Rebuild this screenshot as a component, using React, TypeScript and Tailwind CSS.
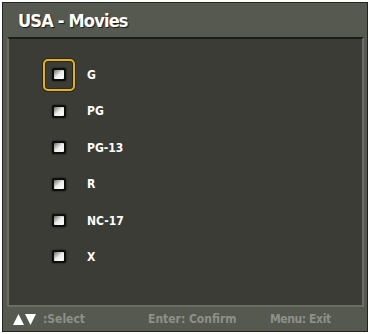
import React from 'react';

const ratings = ['G', 'PG', 'PG-13', 'R', 'NC-17', 'X'];

function CheckBox() {
  return (
    <div className="w-[14px] h-[13px] rounded-[2px] bg-[#0d0d0b] p-[2px] shadow-[0_0_2px_rgba(0,0,0,0.8)]">
      <div className="w-full h-full rounded-[1px] bg-gradient-to-br from-[#707070] via-[#ededeb] to-white" />
    </div>
  );
}

export default function App() {
  const selected = 0;

  return (
    <div className="w-[370px] h-[334px] bg-white p-[2px] font-['DejaVu_Sans_Condensed','DejaVu_Sans',sans-serif]">
      <div className="h-full flex flex-col border border-[#23241f] bg-[#565950]">
        {/* header */}
        <div className="h-[34px] flex items-center pl-[15px]">
          <span className="text-[18px] font-bold text-white tracking-[-0.8px] [text-shadow:1px_1px_1px_rgba(0,0,0,0.7)]">
            USA - Movies
          </span>
        </div>

        {/* list panel */}
        <div className="flex-1 ml-[4px] mr-[3px] border-2 border-[#6c6e65] border-t-[#1c1d18] bg-[#3c3c37] pt-[17.8px]">
          {ratings.map((r, i) => (
            <div key={r} className="h-[36.4px] flex items-center pl-[34px]">
              <div
                className={
                  'w-[32px] h-[32px] flex items-center justify-center rounded-[5px] ' +
                  (i === selected
                    ? 'border-2 border-[#e3b31c] shadow-[0_0_0_1px_#2a2410,inset_0_0_0_1px_#2a2410]'
                    : '')
                }
              >
                <CheckBox />
              </div>
              <span className="ml-[12px] text-[12px] font-bold text-white">{r}</span>
            </div>
          ))}
        </div>

        {/* footer */}
        <div className="h-[24px] flex items-center text-[12px] font-bold text-[#8e9088]">
          <div className="w-[145px] flex items-center pl-[10px]">
            <svg width="23" height="11" viewBox="0 0 23 11">
              <polygon points="0,11 5.5,0 11,11" fill="white" />
              <polygon points="12,0 23,0 17.5,11" fill="white" />
            </svg>
            <span className="ml-[7px]">:Select</span>
          </div>
          <div className="w-[122px]">Enter: Confirm</div>
          <div className="tracking-[-0.4px]">Menu: Exit</div>
        </div>
      </div>
    </div>
  );
}
